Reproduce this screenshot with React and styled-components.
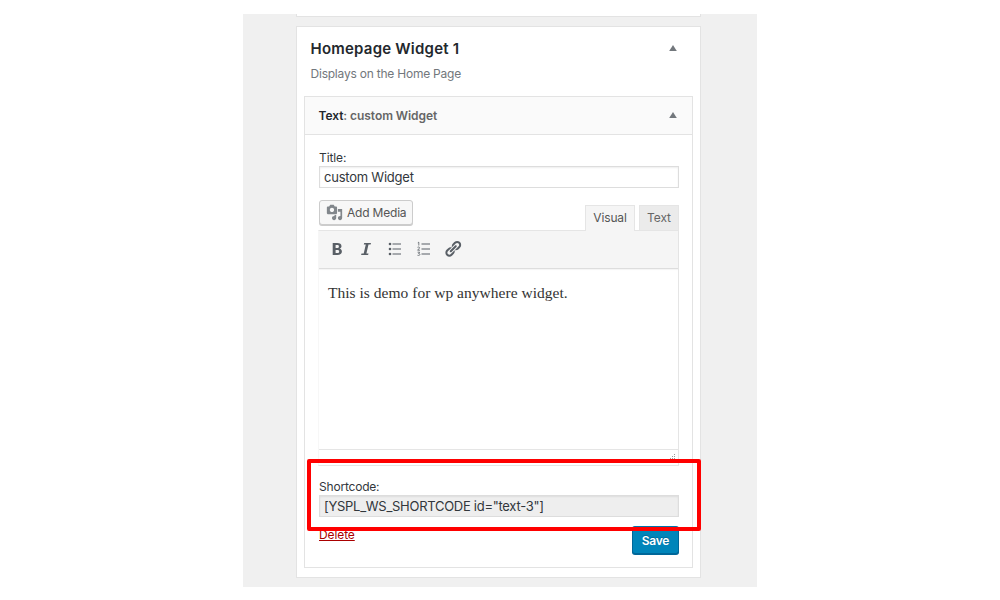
import React from 'react';
import styled, { createGlobalStyle } from 'styled-components';

const Global = createGlobalStyle`
  *, *::before, *::after { box-sizing: border-box; }
  body { margin: 0; background: #fff; font-family: Inter, "Liberation Sans", sans-serif; color: #32373c; }
  h2, h3, p { margin: 0; }
`;

const Page = styled.main`
  position: relative;
  width: 514px;
  height: 573px;
  margin: 14px 0 0 243px;
  padding: 0 56px 0 53px;
  background: #f0f0f0;
`;

const PreviousPanel = styled.div`
  height: 3px;
  background: #fff;
  border: 1px solid #e3e3e3;
  border-top: 0;
`;

const Panel = styled.section`
  height: 552px;
  margin-top: 9px;
  padding: 0 7px;
  background: #fff;
  border: 1px solid #e3e3e3;
`;

const PanelHeader = styled.header`
  height: 69px;
  padding: 11px 16px 0 6.5px;
  display: flex;
  justify-content: space-between;
`;

const Titles = styled.div`
  display: flex;
  flex-direction: column;
  gap: 6px;
`;

const Line = styled.span`
  display: block;
  white-space: nowrap;
  font-size: ${p => p.$size || 12}px;
  font-weight: ${p => p.$weight || 400};
  line-height: ${p => p.$line || 18}px;
  letter-spacing: ${p => p.$track || 0}px;
  color: ${p => p.$color || 'inherit'};
`;

const Muted = styled.span`
  color: #666;
`;

const Caret = styled.svg`
  display: block;
  width: 8px;
  height: 6px;
  margin-top: ${p => p.$top}px;
  fill: #72777c;
`;

const Widget = styled.article`
  height: 472px;
  border: 1px solid #e3e3e3;
`;

const WidgetHeader = styled.header`
  height: 38px;
  padding: 10px 15px 0 13.5px;
  display: flex;
  justify-content: space-between;
  background: #fafafa;
  border-bottom: 1px solid #e3e3e3;
`;

const WidgetBody = styled.div`
  padding: 14px 13px 0 14px;
`;

const Field = styled.label`
  display: block;
`;

const Input = styled.input`
  display: block;
  width: 360px;
  height: 22px;
  padding: 0 4px ${p => (p.readOnly ? 1 : 0)}px;
  font: 400 13px/19px Inter, "Liberation Sans", sans-serif;
  letter-spacing: ${p => p.$track}px;
  color: #32373c;
  border: 1px solid #ddd;
  border-radius: 0;
  outline: 0;
  background: ${p => (p.readOnly ? '#eee' : '#fff')};
  box-shadow: inset 0 1px 2px rgba(0, 0, 0, 0.07);
`;

const EditorTop = styled.div`
  height: 42px;
  padding-top: 12px;
  display: flex;
  justify-content: space-between;
`;

const MediaButton = styled.button`
  width: 94px;
  height: 25px;
  padding: 0 0 0 6px;
  display: flex;
  align-items: center;
  gap: 4px;
  font-family: inherit;
  color: #555;
  background: #f7f7f7;
  border: 1px solid #ccc;
  border-radius: 3px;
  box-shadow: 0 1px 0 #ccc;
`;

const Tabs = styled.div`
  display: flex;
  gap: 4px;
  padding-top: 5px;
`;

const Tab = styled.button`
  position: relative;
  z-index: 1;
  width: ${p => p.$width}px;
  height: ${p => (p.$active ? 26 : 25)}px;
  padding: ${p => (p.$active ? '0 0 1px' : '0')};
  display: flex;
  justify-content: center;
  align-items: center;
  font-family: inherit;
  color: ${p => (p.$active ? '#555' : '#666')};
  background: ${p => (p.$active ? '#f5f5f5' : '#ebebeb')};
  border: 1px solid #e5e5e5;
  border-bottom: 0;
`;

const Editor = styled.div`
  width: 361px;
  height: 236px;
  margin-left: -1px;
  border: 1px solid #e5e5e5;
  border-left-color: #f7f7f7;
`;

const Toolbar = styled.div`
  height: 38px;
  padding: 0 0 1px 7.5px;
  display: flex;
  align-items: center;
  gap: 9px;
  background: #f5f5f5;
  border-bottom: 1px solid #ddd;
  box-shadow: 0 1px 1px rgba(0, 0, 0, 0.04);
`;

const ToolIcon = styled.svg`
  width: 20px;
  height: 20px;
  fill: #595f66;
`;

const Content = styled.p`
  height: 180px;
  padding: 13px 9px;
  font: 15.5px/22px "Liberation Serif", serif;
  letter-spacing: 0.02px;
  color: #333;
  white-space: nowrap;
`;

const StatusBar = styled.div`
  height: 16px;
  padding: 4px 2px;
  display: flex;
  justify-content: flex-end;
  border-top: 1px solid #e5e5e5;
`;

const ShortcodeField = styled(Field)`
  padding-top: 12px;
`;

const Actions = styled.div`
  height: 38px;
  padding-top: 9px;
  display: flex;
  justify-content: space-between;
  align-items: flex-start;
`;

const DeleteLink = styled.a`
  color: #a00;
  text-decoration: underline;
`;

const SaveButton = styled.button`
  width: 47px;
  height: 28px;
  padding: 1px 0 0;
  display: flex;
  justify-content: center;
  align-items: center;
  font-family: inherit;
  color: #fff;
  background: #0085ba;
  border: 1px solid #006799;
  border-top-color: #0073aa;
  border-radius: 3px;
  box-shadow: 0 1px 0 #006799;
  text-shadow: 0 -1px 1px #006799;
`;

const Highlight = styled.div`
  position: absolute;
  z-index: 2;
  left: 64px;
  top: 445px;
  width: 394px;
  height: 72px;
  border: 4px solid #f00;
  border-radius: 2px;
  pointer-events: none;
`;

const Up = ({ top }) => (
  <Caret $top={top} viewBox="0 0 8 6"><path d="M4 0 7.800 6H.2Z" /></Caret>
);

const MediaIcon = () => (
  <svg width="17" height="17" viewBox="0 0 20 20" fill="#82878c">
    <path d="M13 11V4c0-.55-.45-1-1-1h-1.67L9 1H5L3.67 3H2c-.55 0-1 .45-1 1v7c0 .55.45 1 1 1h10c.55 0 1-.45 1-1zM7 4.500c1.380 0 2.500 1.120 2.500 2.500S8.380 9.500 7 9.500 4.500 8.380 4.500 7 5.620 4.500 7 4.500zM14 6h5v10.500c0 1.380-1.120 2.500-2.500 2.500S14 17.880 14 16.500s1.120-2.500 2.500-2.500c.17 0 .34.020.5.050V9h-3V6zm-4 8.050V13h2v3.500c0 1.380-1.120 2.500-2.500 2.500S7 17.880 7 16.500 8.120 14 9.500 14c.17 0 .34.020.5.050z" />
  </svg>
);

const BoldIcon = () => (
  <ToolIcon viewBox="0 0 20 20">
    <path fillRule="evenodd" d="M5.700 4v12h4.600c2.900 0 4.600-1.200 4.600-3.500 0-1.500-.8-2.500-2.200-2.800 1.100-.4 1.800-1.300 1.800-2.500C14.500 5.100 12.900 4 10.200 4H5.700zm2.900 2h1.500c1.200 0 1.800.4 1.800 1.400S11.200 9 10.100 9H8.600V6zm0 4.900h1.700c1.300 0 1.900.5 1.900 1.500s-.7 1.600-1.900 1.600H8.600v-3.100z" />
  </ToolIcon>
);

const ItalicIcon = () => (
  <ToolIcon viewBox="0 0 20 20">
    <path d="M8.200 4h6.800l-.4 1.600h-2.100l-2.100 8.800h2.100L12.100 16H5.100l.4-1.600h2.200l2.100-8.800H7.800z" />
  </ToolIcon>
);

const BulletIcon = () => (
  <ToolIcon viewBox="0 0 20 20">
    <circle cx="5" cy="5" r="1.300" /><circle cx="5" cy="10" r="1.300" /><circle cx="5" cy="15" r="1.300" />
    <path d="M7.500 4.500h8.500v1H7.500zM7.500 9.500h8.500v1H7.500zM7.500 14.500h8.500v1H7.500z" />
  </ToolIcon>
);

const NumberIcon = () => (
  <ToolIcon viewBox="0 0 20 20">
    <path d="M7.500 4.500h8.500v1H7.500zM7.500 9.500h8.500v1H7.500zM7.500 14.500h8.500v1H7.500z" />
    <path fill="none" stroke="#595f66" strokeWidth=".8" d="m3.800 3.800 1-.6v3.300M3.500 8.300c1.900-.9 2.600.3 1.400 1.500l-1.300 1.400H6M3.600 13.200h2.100l-1.100 1.300c2.200 0 1.600 2.500-1.100 1.800" />
  </ToolIcon>
);

const LinkIcon = () => (
  <ToolIcon viewBox="0 0 20 20">
    <path d="M17.740 2.760c1.680 1.690 1.680 4.410 0 6.100l-1.530 1.520c-1.120 1.120-2.700 1.470-4.140 1.090l2.620-2.610.76-.77.76-.76c.84-.84.84-2.200 0-3.040-.84-.85-2.200-.85-3.040 0l-.77.760-3.380 3.380c-.37-1.440-.02-3.020 1.100-4.140l1.520-1.530c1.690-1.680 4.420-1.680 6.100 0zM8.590 13.430l5.340-5.340c.42-.42.42-1.100 0-1.520-.44-.43-1.130-.39-1.530 0l-5.330 5.340c-.42.42-.42 1.100 0 1.520.44.43 1.130.39 1.520 0zm-.76 2.290l4.140-4.150c.38 1.440.03 3.020-1.090 4.140l-1.520 1.530c-1.690 1.680-4.410 1.680-6.100 0-1.680-1.680-1.680-4.420 0-6.100l1.530-1.520c1.120-1.120 2.700-1.470 4.140-1.100l-4.140 4.150c-.85.84-.85 2.200 0 3.050.84.840 2.200.840 3.040 0z" transform="translate(.5 .5) scale(.93)" />
  </ToolIcon>
);

const ResizeGrip = () => (
  <svg width="6" height="6" viewBox="0 0 6 6" fill="#999">
    <path d="M4 0h1v1H4zM2 2h1v1H2zM4 2h1v1H4zM0 4h1v1H0zM2 4h1v1H2zM4 4h1v1H4z" />
  </svg>
);

export default function App() {
  return (
    <>
      <Global />
      <Page>
        <PreviousPanel />
        <Panel>
          <PanelHeader>
            <Titles>
              <Line as="h2" $size={15} $weight={600} $line={21} $track={0.22} $color="#23282d">Homepage Widget 1</Line>
              <Line as="p" $track={-0.22} $color="#72777c">Displays on the Home Page</Line>
            </Titles>
            <Up top={7} />
          </PanelHeader>
          <Widget>
            <WidgetHeader>
              <Line as="h3" $weight={600} $track={-0.06} $color="#23282d">Text<Muted>: custom Widget</Muted></Line>
              <Up top={5} />
            </WidgetHeader>
            <WidgetBody>
              <Field>
                <Line $line={17} $track={-0.1}>Title:</Line>
                <Input defaultValue="custom Widget" $track={-0.23} />
              </Field>
              <EditorTop>
                <MediaButton><MediaIcon /><Line $track={-0.2}>Add Media</Line></MediaButton>
                <Tabs>
                  <Tab $active $width={50}><Line $track={-0.15}>Visual</Line></Tab>
                  <Tab $width={40}><Line $track={-0.1}>Text</Line></Tab>
                </Tabs>
              </EditorTop>
              <Editor>
                <Toolbar><BoldIcon /><ItalicIcon /><BulletIcon /><NumberIcon /><LinkIcon /></Toolbar>
                <Content>This is demo for wp anywhere widget.</Content>
                <StatusBar><ResizeGrip /></StatusBar>
              </Editor>
              <ShortcodeField>
                <Line $line={17} $track={-0.2}>Shortcode:</Line>
                <Input readOnly value={'[YSPL_WS_SHORTCODE id="text-3"]'} $track={-0.28} />
              </ShortcodeField>
              <Actions>
                <DeleteLink><Line $track={-0.1}>Delete</Line></DeleteLink>
                <SaveButton><Line $weight={600} $track={-0.25}>Save</Line></SaveButton>
              </Actions>
            </WidgetBody>
          </Widget>
        </Panel>
        <Highlight />
      </Page>
    </>
  );
}
